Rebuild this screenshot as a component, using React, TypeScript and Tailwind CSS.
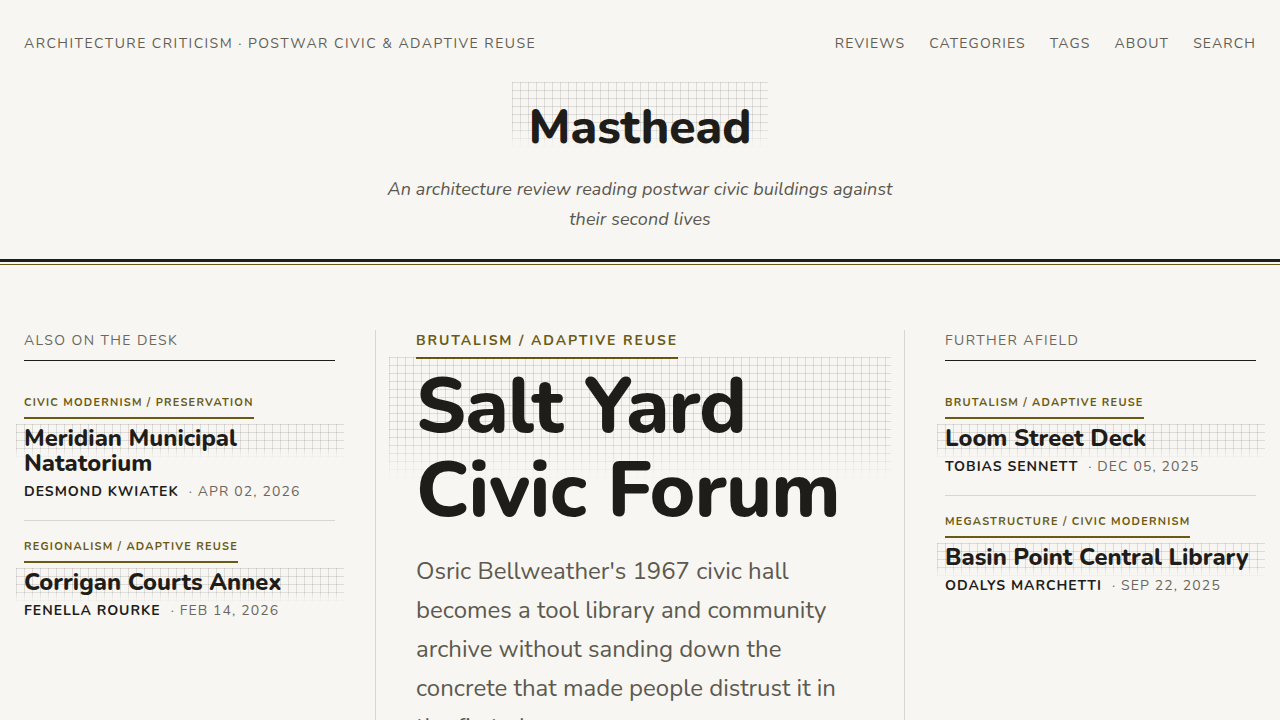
import React from "react";

const FONT = { fontFamily: '"Nunito", "Lato", "Noto Sans", sans-serif' };

const GRID =
  "pointer-events-none absolute [background-image:linear-gradient(to_right,rgba(31,29,26,0.12)_1px,transparent_1px),linear-gradient(to_bottom,rgba(31,29,26,0.12)_1px,transparent_1px)] [background-size:8px_8px] [mask-image:linear-gradient(to_bottom,black_65%,transparent)]";

type Item = { kicker: string; title: string; author: string; date: string };

const deskItems: Item[] = [
  {
    kicker: "Civic Modernism / Preservation",
    title: "Meridian Municipal Natatorium",
    author: "Desmond Kwiatek",
    date: "Apr 02, 2026",
  },
  {
    kicker: "Regionalism / Adaptive Reuse",
    title: "Corrigan Courts Annex",
    author: "Fenella Rourke",
    date: "Feb 14, 2026",
  },
];

const afieldItems: Item[] = [
  {
    kicker: "Brutalism / Adaptive Reuse",
    title: "Loom Street Deck",
    author: "Tobias Sennett",
    date: "Dec 05, 2025",
  },
  {
    kicker: "Megastructure / Civic Modernism",
    title: "Basin Point Central Library",
    author: "Odalys Marchetti",
    date: "Sep 22, 2025",
  },
];

function SideList({ heading, items }: { heading: string; items: Item[] }) {
  return (
    <aside>
      <h2 className="border-b border-[#1f1d1a] pt-px pb-[9px] text-[14px] leading-[20px] uppercase tracking-[0.1em] text-[#6b675e]">
        {heading}
      </h2>
      <ul className="mt-[28px]">
        {items.map((it, i) => (
          <li
            key={it.title}
            className={
              i === 0
                ? "pb-[18px] border-b border-[#d9d6cf]"
                : "pt-[12px] pb-[18px]"
            }
          >
            <span className="inline-block border-b-2 border-[#6b5a14] pb-[6px] text-[11px] leading-[16px] font-bold uppercase tracking-[0.11em] text-[#6b5a14]">
              {it.kicker}
            </span>
            <div className="relative mt-[7px]">
              <div className={`${GRID} -left-2 -right-[9px] -top-[2px] h-[35px]`} />
              <h3 className="relative text-[23.7px] leading-[25px] font-extrabold text-[#1f1d1a]">
                {it.title}
              </h3>
            </div>
            <p className="mt-[6px] text-[14px] leading-[20px] uppercase">
              <span className="font-bold tracking-[0.07em] text-[#1f1d1a]">{it.author}</span>
              <span className="ml-[10px] tracking-[0.08em] text-[#6b675e]">· {it.date}</span>
            </p>
          </li>
        ))}
      </ul>
    </aside>
  );
}

export default function App() {
  return (
    <div className="min-h-screen bg-[#f7f6f2] text-[#1f1d1a]" style={FONT}>
      <header>
        <div className="flex items-center justify-between px-6 pt-[34px] text-[14px] leading-[20px] uppercase tracking-[0.08em] text-[#625e55]">
          <p className="tracking-[0.105em]">Architecture Criticism · Postwar Civic &amp; Adaptive Reuse</p>
          <nav className="flex gap-6">
            <a>Reviews</a>
            <a>Categories</a>
            <a>Tags</a>
            <a>About</a>
            <a>Search</a>
          </nav>
        </div>

        <div className="flex flex-col items-center pt-[28px] pb-[25px]">
          <div className="relative px-4 pt-[18px]">
            <div className={`${GRID} inset-x-0 top-0 h-[66px]`} />
            <h1 className="relative text-[48px] leading-[54px] font-extrabold text-[#1f1d1a]">
              Masthead
            </h1>
          </div>
          <p className="mt-[20px] max-w-[520px] text-center text-[18px] leading-[30px] italic tracking-[0.005em] text-[#5a564e]">
            An architecture review reading postwar civic buildings against their second lives
          </p>
        </div>

        <div className="border-t-[3px] border-[#1f1d1a]" />
        <div className="mt-[2px] border-t border-[#6b5a14]" />
      </header>

      <main className="grid grid-cols-[311px_1fr_311px] gap-10 px-6 pt-[65px]">
        <SideList heading="Also on the desk" items={deskItems} />

        <article className="border-x border-[#d9d6cf] px-10 pb-10">
          <span className="block w-fit border-b-2 border-[#6b5a14] pt-px pb-[6px] text-[14px] leading-[20px] font-bold uppercase tracking-[0.135em] text-[#6b5a14]">
            Brutalism / Adaptive Reuse
          </span>
          <div className="relative mt-[6px]">
            <div className={`${GRID} -left-[27px] -right-[27px] -top-[8px] h-[124px]`} />
            <h2 className="relative text-[78px] leading-[84px] font-extrabold tracking-[-0.01em] text-[#1f1d1a]">
              Salt Yard Civic Forum
            </h2>
          </div>
          <p className="mt-[19px] text-[24px] leading-[39px] text-[#5d594f]">
            Osric Bellweather's 1967 civic hall becomes a tool library and community archive
            without sanding down the concrete that made people distrust it in the first place.
          </p>
        </article>

        <SideList heading="Further afield" items={afieldItems} />
      </main>
    </div>
  );
}
